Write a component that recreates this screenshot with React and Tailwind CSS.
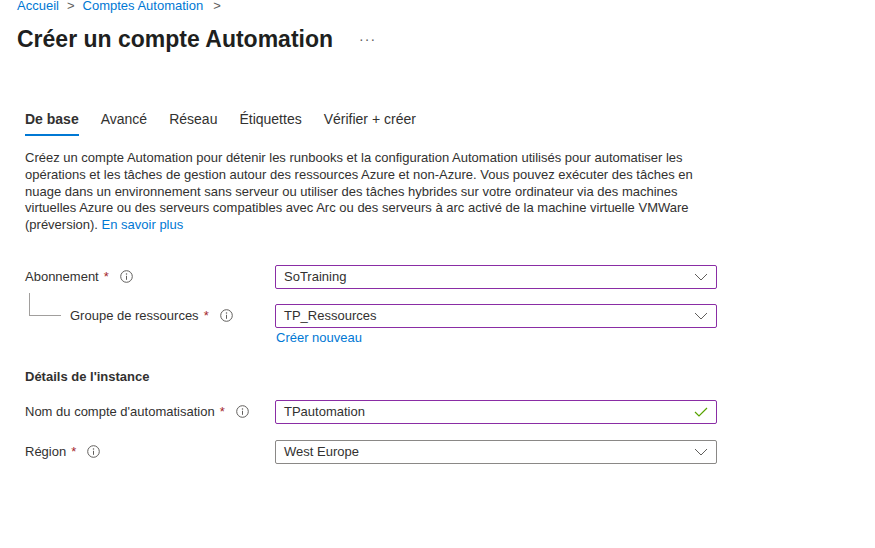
import React from "react";

const FONT = { fontFamily: '"Liberation Sans", Arial, sans-serif' };

function InfoIcon() {
  return (
    <svg width="13" height="13" viewBox="0 0 13 13" className="shrink-0">
      <circle cx="6.5" cy="6.5" r="5.8" fill="none" stroke="#605e5c" strokeWidth="1" />
      <circle cx="6.5" cy="4" r="0.75" fill="#605e5c" />
      <path d="M6.5 5.8v4" stroke="#605e5c" strokeWidth="1" />
    </svg>
  );
}

function Chevron() {
  return (
    <svg width="14" height="8" viewBox="0 0 14 8" className="shrink-0">
      <path d="M1 1l6 6 6-6" fill="none" stroke="#605e5c" strokeWidth="1" />
    </svg>
  );
}

function Check() {
  return (
    <svg width="14" height="10" viewBox="0 0 14 10" className="shrink-0">
      <path d="M1 5l4 4 8-8" fill="none" stroke="#57a300" strokeWidth="1.2" />
    </svg>
  );
}

function Label({ text }) {
  return (
    <div className="flex items-center text-[13px] text-[#323130]">
      <span>{text}</span>
      <span className="ml-[5px] text-[#a4262c]">*</span>
      <span className="ml-[11px]">
        <InfoIcon />
      </span>
    </div>
  );
}

function Field({ value, border = "border-[#8a2da5]", icon = "chevron" }) {
  return (
    <div
      className={`flex items-center justify-between w-[442px] h-[24px] border ${border} rounded-[2px] pl-[8px] pr-[8px] text-[13px] text-[#323130]`}
    >
      <span>{value}</span>
      {icon === "chevron" ? <Chevron /> : <Check />}
    </div>
  );
}

export default function App() {
  const tabs = ["De base", "Avancé", "Réseau", "Étiquettes", "Vérifier + créer"];

  return (
    <div className="w-[875px] h-[548px] bg-white overflow-hidden" style={FONT}>
      {/* breadcrumb */}
      <div className="flex items-center mt-[-2px] pl-[17px] h-[16px] text-[13px] text-[#0078d4]">
        <span>Accueil</span>
        <span className="mx-[8px] text-[#605e5c]">&gt;</span>
        <span>Comptes Automation</span>
        <span className="ml-[10px] text-[#605e5c]">&gt;</span>
      </div>

      {/* title */}
      <div className="flex items-center mt-[9px] pl-[17px] h-[32px]">
        <h1 className="text-[23px] font-semibold text-[#201f1e]">Créer un compte Automation</h1>
        <span className="ml-[26px] text-[14px] text-[#605e5c] tracking-[1px]">···</span>
      </div>

      {/* tabs */}
      <div className="flex gap-[22px] mt-[54px] pl-[25px] text-[14px] text-[#323130]">
        {tabs.map((t, i) => (
          <div
            key={t}
            className={`leading-[20px] pb-[5px] border-b-2 ${
              i === 0 ? "font-semibold border-[#0078d4]" : "border-transparent"
            }`}
          >
            {t}
          </div>
        ))}
      </div>

      {/* description */}
      <div className="mt-[14px] pl-[25px] text-[13px] leading-[16.75px] text-[#323130]">
        <div>Créez un compte Automation pour détenir les runbooks et la configuration Automation utilisés pour automatiser les</div>
        <div>opérations et les tâches de gestion autour des ressources Azure et non-Azure. Vous pouvez exécuter des tâches en</div>
        <div>nuage dans un environnement sans serveur ou utiliser des tâches hybrides sur votre ordinateur via des machines</div>
        <div>virtuelles Azure ou des serveurs compatibles avec Arc ou des serveurs à arc activé de la machine virtuelle VMWare</div>
        <div>
          (préversion). <span className="text-[#0078d4]">En savoir plus</span>
        </div>
      </div>

      {/* form */}
      <div className="pl-[25px] mt-[31px]">
        <div className="flex items-center">
          <div className="w-[250px]">
            <Label text="Abonnement" />
          </div>
          <Field value="SoTraining" />
        </div>

        <div className="flex items-center mt-[15px]">
          <div className="w-[250px] flex items-center">
            <div className="self-start ml-[4px] mt-[-13px] w-[32px] h-[23px] border-l border-b border-[#a19f9d]" />
            <div className="ml-[9px]">
              <Label text="Groupe de ressources" />
            </div>
          </div>
          <Field value="TP_Ressources" />
        </div>
        <div className="ml-[251px] mt-[2px] text-[13px] leading-[16px] text-[#0078d4]">Créer nouveau</div>

        <div className="mt-[23px] text-[13px] font-semibold text-[#323130] leading-[16px]">Détails de l'instance</div>

        <div className="flex items-center mt-[15px]">
          <div className="w-[250px]">
            <Label text="Nom du compte d'automatisation" />
          </div>
          <Field value="TPautomation" icon="check" />
        </div>

        <div className="flex items-center mt-[16px]">
          <div className="w-[250px]">
            <Label text="Région" />
          </div>
          <Field value="West Europe" border="border-[#8a8886]" />
        </div>
      </div>
    </div>
  );
}
